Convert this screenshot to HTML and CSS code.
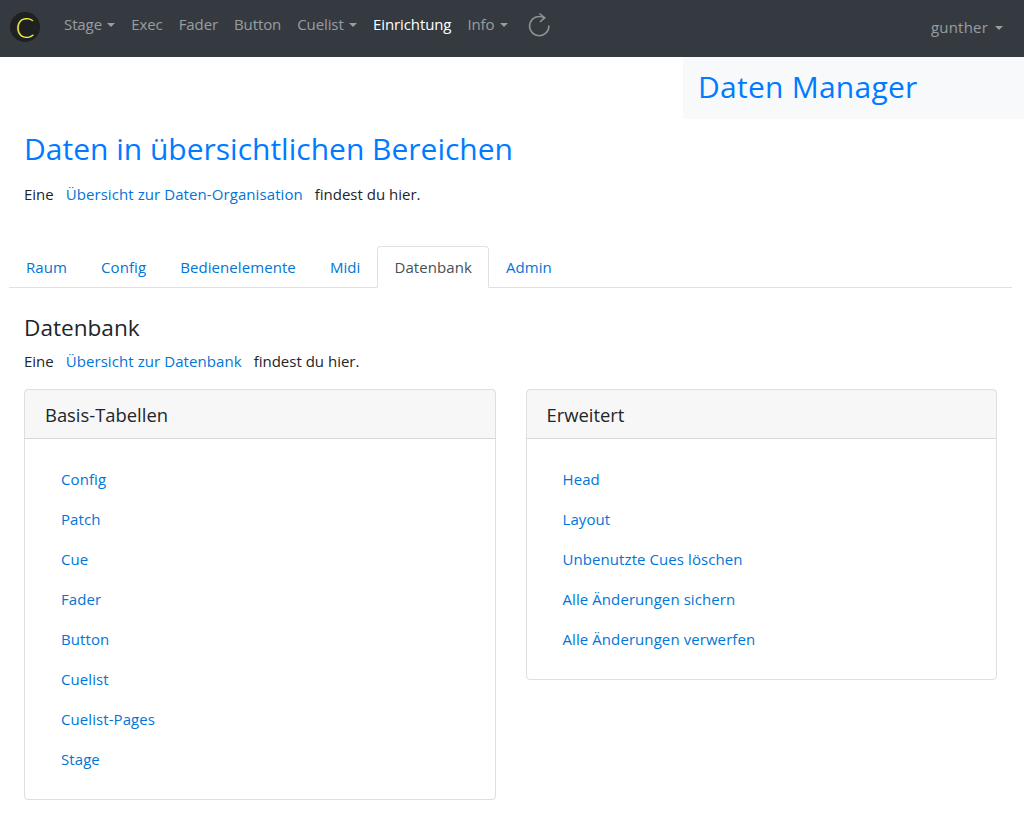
FILE: index.html
```html
<!DOCTYPE html>
<html lang="de">
<head>
    <meta charset="UTF-8">
    <meta name="viewport" content="width=device-width, initial-scale=1.0">
    <title>Daten Manager</title>
    <link rel="stylesheet" href="styles.css">
</head>
<body>
    <nav class="navbar">
        <a class="brand" href="#">C</a>
        <ul class="nav-list">
            <li><a class="nav-link caret" href="#">Stage</a></li>
            <li><a class="nav-link" href="#">Exec</a></li>
            <li><a class="nav-link" href="#">Fader</a></li>
            <li><a class="nav-link" href="#">Button</a></li>
            <li><a class="nav-link caret" href="#">Cuelist</a></li>
            <li><a class="nav-link active" href="#">Einrichtung</a></li>
            <li><a class="nav-link caret" href="#">Info</a></li>
        </ul>
        <svg class="reload" width="26" height="28" viewBox="0 0 26 28" fill="none" stroke="#8f9396" stroke-width="1.6">
            <path d="M21.8 14.5A9.6 9.6 0 1 1 17.4 7"/>
            <path d="M12.5 2.5L17.7 6.7L13 11"/>
        </svg>
        <a class="nav-link caret user" href="#">gunther</a>
    </nav>

    <div class="title-row">
        <div class="title-box"><h1>Daten Manager</h1></div>
    </div>

    <section class="intro">
        <h2>Daten in übersichtlichen Bereichen</h2>
        <p>Eine <a href="#">Übersicht zur Daten-Organisation</a> findest du hier.</p>
    </section>

    <ul class="tabs">
        <li><a href="#">Raum</a></li>
        <li><a href="#">Config</a></li>
        <li><a href="#">Bedienelemente</a></li>
        <li><a href="#">Midi</a></li>
        <li><a class="active" href="#">Datenbank</a></li>
        <li><a href="#">Admin</a></li>
    </ul>

    <section class="tab-content">
        <h3>Datenbank</h3>
        <p>Eine <a href="#">Übersicht zur Datenbank</a> findest du hier.</p>
        <div class="cards">
            <div class="card">
                <div class="card-header">Basis-Tabellen</div>
                <ul class="card-body">
                    <li><a href="#">Config</a></li>
                    <li><a href="#">Patch</a></li>
                    <li><a href="#">Cue</a></li>
                    <li><a href="#">Fader</a></li>
                    <li><a href="#">Button</a></li>
                    <li><a href="#">Cuelist</a></li>
                    <li><a href="#">Cuelist-Pages</a></li>
                    <li><a href="#">Stage</a></li>
                </ul>
            </div>
            <div class="card">
                <div class="card-header">Erweitert</div>
                <ul class="card-body">
                    <li><a href="#">Head</a></li>
                    <li><a href="#">Layout</a></li>
                    <li><a href="#">Unbenutzte Cues löschen</a></li>
                    <li><a href="#">Alle Änderungen sichern</a></li>
                    <li><a href="#">Alle Änderungen verwerfen</a></li>
                </ul>
            </div>
        </div>
    </section>
</body>
</html>
```

FILE: styles.css
```css
* {
    box-sizing: border-box;
}
body {
    margin: 0;
    font-family: "Open Sans", "Noto Sans", sans-serif;
    font-size: 15px;
    line-height: 24px;
    color: #212529;
    background-color: #fff;
}
a {
    color: #0275d8;
    text-decoration: none;
    letter-spacing: 0.08px;
}
ul {
    list-style: none;
    margin: 0;
    padding: 0;
}
h1, h2, h3, p {
    margin: 0;
    font-weight: 400;
}

/* navbar */
.navbar {
    display: flex;
    align-items: center;
    height: 57px;
    padding: 0 13px 0 10px;
    background-color: #343a40;
}
.brand {
    width: 30px;
    height: 30px;
    margin-top: -3px;
    border-radius: 50%;
    background-color: #1e2022;
    color: #f0f24e;
    font-family: "Lato", sans-serif;
    font-size: 28px;
    font-weight: 300;
    line-height: 30px;
    text-align: center;
}
.nav-list {
    display: flex;
    margin-left: 16px;
    margin-top: -10px;
}
.nav-link {
    display: block;
    padding: 0 8px;
    color: rgba(255, 255, 255, 0.5);
    letter-spacing: -0.1px;
}
.nav-link.active {
    color: #fff;
}
.caret::after {
    content: "";
    display: inline-block;
    margin-left: 5.3px;
    vertical-align: 3px;
    border-top: 4px solid;
    border-left: 4.5px solid transparent;
    border-right: 4.5px solid transparent;
}
.reload {
    margin-left: 11px;
    margin-top: -7px;
}
.user {
    margin-left: auto;
    margin-top: -4px;
    letter-spacing: 0.2px;
}
.user::after {
    margin-left: 7px;
}

/* page title */
.title-row {
    display: flex;
    justify-content: flex-end;
}
.title-box {
    width: 341px;
    height: 62px;
    padding: 10px 15px;
    background-color: #f8f9fa;
}
h1, h2 {
    color: #007bff;
    font-size: 30px;
    line-height: 40px;
}
h1 {
    letter-spacing: 0.25px;
}
.intro {
    padding: 10px 24px 0;
}
.intro p {
    margin-top: 13px;
}
p a {
    margin: 0 8px;
}

/* tabs */
.tabs {
    display: flex;
    margin: 40px 12px 0 9px;
    border-bottom: 1px solid #dee2e6;
}
.tabs a {
    display: block;
    height: 42px;
    margin-bottom: -1px;
    padding: 8px 16px;
    border: 1px solid transparent;
    border-radius: 4px 4px 0 0;
}
.tabs a.active {
    color: #495057;
    background-color: #fff;
    border-color: #dee2e6 #dee2e6 #fff;
}

/* tab content */
.tab-content {
    padding: 25px 27px 24px 24px;
}
h3 {
    font-size: 22.6px;
    line-height: 30px;
}
.tab-content p {
    margin-top: 6px;
}
.cards {
    display: flex;
    align-items: flex-start;
    gap: 30px;
    margin-top: 16px;
}
.card {
    flex: 1;
    border: 1px solid rgba(0, 0, 0, 0.125);
    border-radius: 4px;
}
.card-header {
    height: 49px;
    padding: 0 20px;
    font-size: 18.4px;
    line-height: 50px;
    background-color: rgba(0, 0, 0, 0.03);
    border-bottom: 1px solid rgba(0, 0, 0, 0.125);
}
.card-body {
    padding: 20px 36px;
}
.card-body li {
    height: 40px;
    line-height: 40px;
}
```
